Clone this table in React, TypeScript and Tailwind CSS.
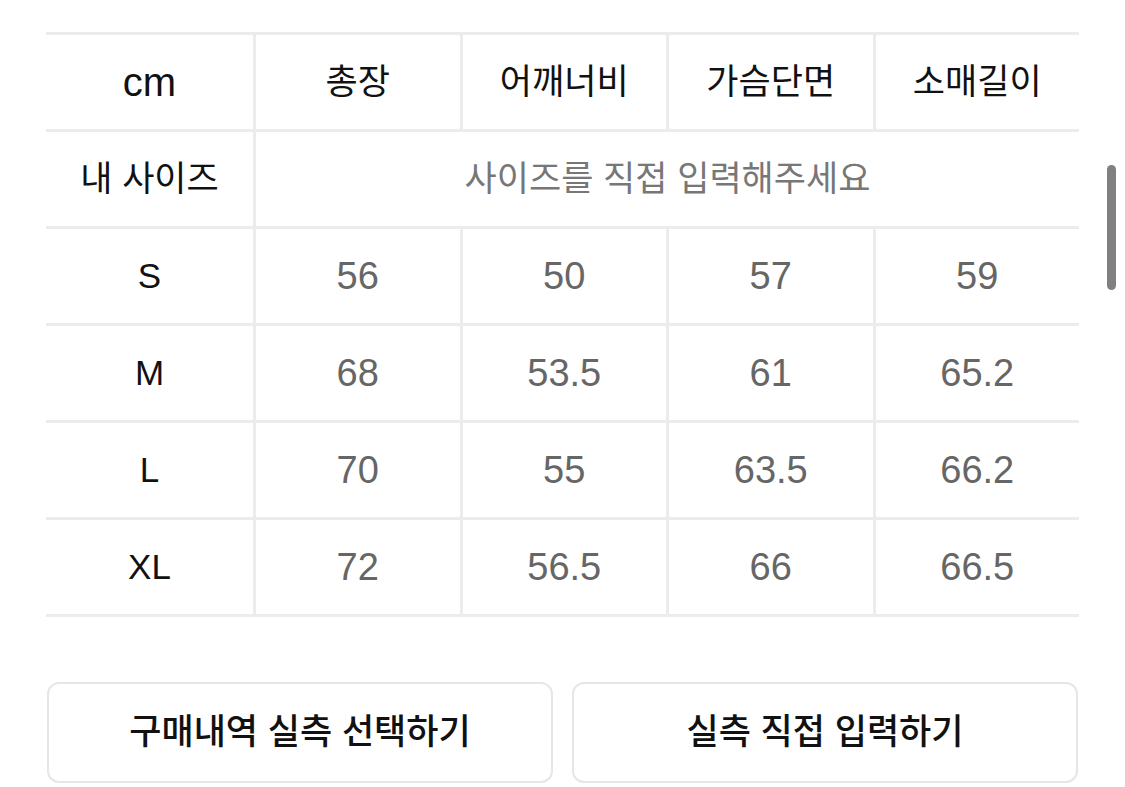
import React from "react";

const FONT = { fontFamily: '"Liberation Sans", "Noto Sans CJK KR", sans-serif' };

const headers = ["총장", "어깨너비", "가슴단면", "소매길이"];
const rows: { size: string; vals: string[] }[] = [
  { size: "S", vals: ["56", "50", "57", "59"] },
  { size: "M", vals: ["68", "53.5", "61", "65.2"] },
  { size: "L", vals: ["70", "55", "63.5", "66.2"] },
  { size: "XL", vals: ["72", "56.5", "66", "66.5"] },
];

export default function App() {
  return (
    <div className="relative w-[1125px] h-[787px] bg-white overflow-hidden" style={FONT}>
      <div className="pt-[32px] pl-[46px] pr-[46px]">
        <div className="border-t-[3px] border-[#ececec]">
          {/* header row */}
          <div className="flex h-[97px] border-b-[3px] border-[#ececec]">
            <div className="w-[207px] shrink-0 flex items-center justify-center text-[40px] text-[#111]">cm</div>
            {headers.map((h) => (
              <div key={h} className="flex-1 border-l-[3px] border-[#ececec] flex items-center justify-center text-[35px] text-[#111]">
                {h}
              </div>
            ))}
          </div>
          {/* my size row */}
          <div className="flex h-[97px] border-b-[3px] border-[#ececec]">
            <div className="w-[207px] shrink-0 flex items-center justify-center text-[35px] text-[#111]">내 사이즈</div>
            <div className="flex-1 border-l-[3px] border-[#ececec] flex items-center justify-center text-[35px] text-[#777]">
              사이즈를 직접 입력해주세요
            </div>
          </div>
          {rows.map((r) => (
            <div key={r.size} className="flex h-[97px] border-b-[3px] border-[#ececec]">
              <div className="w-[207px] shrink-0 flex items-center justify-center text-[35px] text-[#111]">{r.size}</div>
              {r.vals.map((v, i) => (
                <div key={i} className="flex-1 border-l-[3px] border-[#ececec] flex items-center justify-center text-[38px] text-[#666]">
                  {v}
                </div>
              ))}
            </div>
          ))}
        </div>
        <div className="mt-[65px] flex gap-[19px] pl-[1px] pr-[1px]">
          <button className="flex-1 h-[101px] rounded-[12px] border-2 border-[#e6e6e6] bg-white flex items-center justify-center text-[35px] font-medium text-[#111]">
            구매내역 실측 선택하기
          </button>
          <button className="flex-1 h-[101px] rounded-[12px] border-2 border-[#e6e6e6] bg-white flex items-center justify-center text-[35px] font-medium text-[#111]">
            실측 직접 입력하기
          </button>
        </div>
      </div>
      <div className="absolute left-[1107px] top-[165px] w-[9px] h-[125px] rounded-full bg-[#808080]" />
    </div>
  );
}
